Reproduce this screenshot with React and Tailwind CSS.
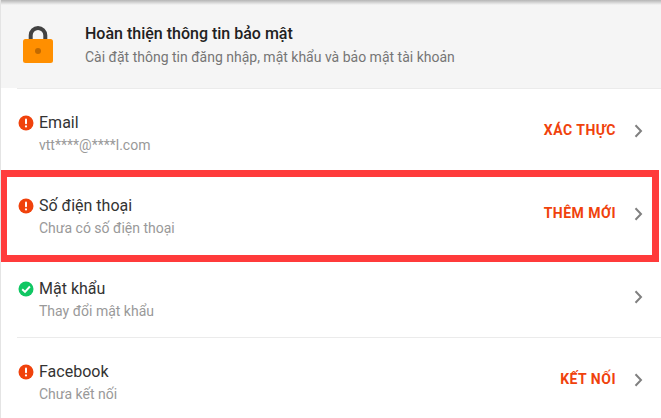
const rows = [
  { title: 'Email', sub: 'vtt****@****l.com', action: 'XÁC THỰC', status: 'warn' },
  { title: 'Số điện thoại', sub: 'Chưa có số điện thoại', action: 'THÊM MỚI', status: 'warn', marked: true },
  { title: 'Mật khẩu', sub: 'Thay đổi mật khẩu', status: 'ok', line: true },
  { title: 'Facebook', sub: 'Chưa kết nối', action: 'KẾT NỐI', status: 'warn' },
];

function StatusIcon({ status }) {
  if (status === 'ok') {
    return (
      <svg width="16" height="16" viewBox="0 0 16 16" className="shrink-0">
        <circle cx="8" cy="8" r="7.5" fill="#10c763" />
        <path d="M4.2 8.2 7 10.9l4.9-5.4" fill="none" stroke="#fff" strokeWidth="1.9" />
      </svg>
    );
  }
  return (
    <svg width="16" height="16" viewBox="0 0 16 16" className="shrink-0">
      <circle cx="8" cy="8" r="7.5" fill="#f0420c" />
      <rect x="7" y="3.5" width="2" height="5.8" rx="1" fill="#fff" />
      <circle cx="8" cy="11.4" r="1.1" fill="#fff" />
    </svg>
  );
}

function Row({ row }) {
  return (
    <div className="relative h-[83px] flex items-center pl-[18px] pr-[18px]">
      <div className="flex-1 mt-[5px]">
        <div className="flex items-center gap-[5px] text-[16px] leading-[24px] text-[#333]">
          <StatusIcon status={row.status} />
          <span>{row.title}</span>
        </div>
        <div className="pl-[21px] text-[14px] leading-[20px] text-[#999]">{row.sub}</div>
      </div>
      {row.action && <span className="text-[14px] font-bold tracking-[0.5px] text-[#f0420c] mr-[18px]">{row.action}</span>}
      <svg width="9" height="14" viewBox="0 0 9 14" className="shrink-0">
        <path d="M1.5 1.2 7 7l-5.5 5.8" fill="none" stroke="#808080" strokeWidth="2" />
      </svg>
      {row.line && <div className="absolute left-[17px] right-0 bottom-0 h-px bg-[#ebebeb]" />}
      {row.marked && <div className="absolute left-0 right-[2px] top-[-2px] h-[92px] border-[7px] border-[#ff3b3b]" />}
    </div>
  );
}

export default function App() {
  return (
    <div className="relative w-[661px] h-[418px] overflow-hidden bg-white border-l border-[#e4e4e4] font-['Roboto',sans-serif]">
      <div className="absolute inset-x-0 top-0 h-[5px] bg-gradient-to-b from-[#b5b5b5] to-transparent" />
      <div className="flex items-center h-[88px] bg-[#f5f5f5] pl-[22px]">
        <svg width="30" height="37" viewBox="0 0 30 37" className="shrink-0">
          <path d="M7.7 15V9.3a7.3 7.3 0 0 1 14.6 0V15" fill="none" stroke="#424242" strokeWidth="4" />
          <rect x="0" y="13" width="30" height="24" rx="2.5" fill="#ff8f00" />
          <circle cx="15" cy="25" r="3" fill="#c26a00" />
        </svg>
        <div className="ml-[32px] mt-[1px]">
          <div className="text-[16px] leading-[24px] font-medium text-[#212121]">Hoàn thiện thông tin bảo mật</div>
          <div className="text-[14px] leading-[20px] mt-[1px] text-[#757575]">Cài đặt thông tin đăng nhập, mật khẩu và bảo mật tài khoản</div>
        </div>
      </div>
      <div className="h-px ml-[16px] bg-[#ebebeb]" />
      <div className="-ml-px">
        {rows.map((row) => (
          <Row key={row.title} row={row} />
        ))}
      </div>
    </div>
  );
}
